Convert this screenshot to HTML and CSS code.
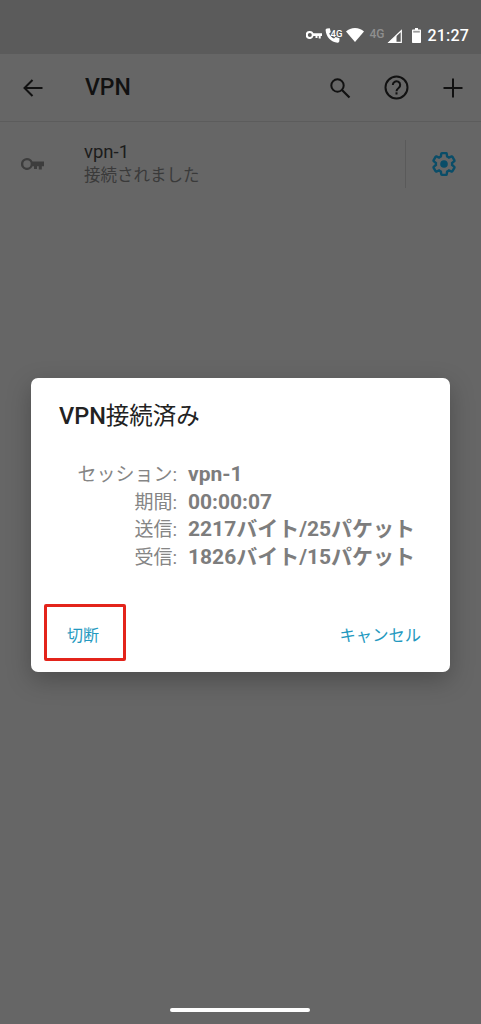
FILE: index.html
```html
<!DOCTYPE html>
<html lang="ja">
<head>
    <meta charset="UTF-8">
    <meta name="viewport" content="width=device-width, initial-scale=1.0">
    <title>VPN</title>
    <link rel="stylesheet" href="styles.css">
</head>
<body>
    <div class="screen">
        <div class="status-bar">
            <svg class="st-key" width="16" height="8" viewBox="0 0 16 8"><path d="M3.800 0a4 4 0 0 1 3.700 2.300H16V5H14.700V7.600H12.700V5H11.500V7H9.500V5H7.500A4 4 0 1 1 3.800 0zm0 2a2 2 0 1 0 0 4 2 2 0 0 0 0-4z" fill="#fff" fill-rule="evenodd"/></svg>
            <span class="st-call">
                <svg width="15" height="15" viewBox="0 0 15 15"><path d="M2 0.500L4.800 0.200 5.800 4 4.200 5.500C5 7.800 6.800 9.600 9 10.500L10.600 9 14.500 10.300 14.300 13.300C14.200 14.300 13.500 14.800 12.500 14.700 6 14 1 9 0.600 2 0.600 1.200 1.200 0.600 2 0.500z" fill="#fff"/></svg>
                <span class="st-4g">4G</span>
            </span>
            <svg class="st-wifi" width="18" height="14" viewBox="0 0 18 14"><path d="M9 14L0 3.600C2.400 1.400 5.500 0 9 0s6.600 1.400 9 3.600z" fill="#fff"/></svg>
            <span class="st-4g-off">4G</span>
            <svg class="st-signal" width="15" height="14" viewBox="0 0 15 14"><path d="M14.300 1.700V13.300H2z" fill="none" stroke="#fff" stroke-width="1.200"/><path d="M9.500 6.500V14H1z" fill="#fff"/></svg>
            <svg class="st-battery" width="9" height="15" viewBox="0 0 9 15"><path d="M3 0H6V1.500H8C8.600 1.500 9 1.900 9 2.500V14C9 14.600 8.600 15 8 15H1C0.400 15 0 14.600 0 14V2.500C0 1.900 0.400 1.500 1 1.500H3z" fill="#fff"/><rect x="1.200" y="2.800" width="6.600" height="1.800" fill="#9c9c9c"/></svg>
            <span class="st-time">21:27</span>
        </div>

        <div class="toolbar">
            <svg class="back-icon" width="20" height="18" viewBox="0 0 20 18"><path d="M19.500 9H2M9.500 1L1.500 9l8 8" fill="none" stroke="#111" stroke-width="2"/></svg>
            <div class="toolbar-title">VPN</div>
            <svg class="search-icon" width="22" height="22" viewBox="0 0 22 22"><circle cx="8.500" cy="8.500" r="6.200" fill="none" stroke="#111" stroke-width="2"/><path d="M13 13l7.500 7.500" stroke="#111" stroke-width="2.200"/></svg>
            <svg class="help-icon" width="25" height="25" viewBox="0 0 25 25"><circle cx="12.500" cy="12.500" r="11" fill="none" stroke="#111" stroke-width="2"/><path d="M8.800 10a3.700 3.700 0 1 1 5.800 3c-1.400 1-2.100 1.600-2.100 3.200" fill="none" stroke="#111" stroke-width="2"/><rect x="11.500" y="17.300" width="2" height="2.200" fill="#111"/></svg>
            <svg class="plus-icon" width="20" height="20" viewBox="0 0 20 20"><path d="M10 0.500v19M0.500 10h19" stroke="#111" stroke-width="2"/></svg>
        </div>

        <div class="vpn-row">
            <svg class="key-icon" width="23" height="12" viewBox="0 0 23 12"><path d="M6 0a6 6 0 0 1 5.500 3.600H23V8.200H20.800V11.500H17.800V8.200H16V11H13V8.200H11.500A6 6 0 1 1 6 0zm0 2.300a3.700 3.700 0 1 0 0 7.400 3.700 3.700 0 0 0 0-7.400z" fill="#3d3d3d" fill-rule="evenodd"/></svg>
            <div class="vpn-text">
                <div class="vpn-name">vpn-1</div>
                <div class="vpn-status">接続されました</div>
            </div>
            <div class="vpn-sep"></div>
            <svg class="gear-icon" width="26" height="26" viewBox="0 0 24 24"><path d="M19.430 12.980c.04-.32.07-.64.070-.98s-.03-.66-.07-.98l2.110-1.650c.19-.15.240-.42.120-.64l-2-3.460c-.12-.22-.39-.3-.61-.22l-2.490 1c-.52-.4-1.080-.73-1.690-.98l-.38-2.650A.488.488 0 0 0 14 2h-4c-.25 0-.46.180-.49.420l-.38 2.650c-.61.250-1.170.590-1.690.98l-2.490-1c-.23-.09-.49 0-.61.220l-2 3.460c-.13.220-.07.490.12.640l2.110 1.650c-.04.320-.07.650-.07.980s.03.660.07.980l-2.110 1.650c-.19.150-.24.420-.12.640l2 3.460c.12.220.39.300.61.220l2.490-1c.52.400 1.080.730 1.690.980l.38 2.650c.03.240.24.420.49.420h4c.25 0 .46-.18.49-.42l.38-2.650c.61-.25 1.170-.59 1.690-.98l2.490 1c.23.090.49 0 .61-.22l2-3.460c.12-.22.07-.49-.12-.64l-2.110-1.650z" fill="none" stroke="#0a4d68" stroke-width="2.200"/><circle cx="12" cy="12" r="3.500" fill="#0a4d68"/></svg>
        </div>

        <div class="home-bar"></div>

        <div class="dialog-layer">
            <div class="dialog">
                <div class="dialog-title"><span class="title-latin">VPN</span>接続済み</div>
                <div class="info">
                    <div class="info-label">セッション:</div><div class="info-value">vpn-1</div>
                    <div class="info-label">期間:</div><div class="info-value">00:00:07</div>
                    <div class="info-label">送信:</div><div class="info-value">2217バイト/25パケット</div>
                    <div class="info-label">受信:</div><div class="info-value">1826バイト/15パケット</div>
                </div>
                <div class="dialog-actions">
                    <div class="action">切断</div>
                    <div class="action action-cancel">キャンセル</div>
                </div>
                <div class="highlight"></div>
            </div>
        </div>
    </div>
</body>
</html>
```

FILE: styles.css
```css
* {
    margin: 0;
    padding: 0;
    box-sizing: border-box;
}
html, body {
    width: 481px;
    height: 1024px;
    overflow: hidden;
}
body {
    font-family: Roboto, "Noto Sans CJK JP", sans-serif;
    background: #666;
}
.screen {
    position: relative;
    height: 1024px;
    display: flex;
    flex-direction: column;
    background: #666;
}
.status-bar {
    height: 54px;
    padding: 22px 12px 0 0;
    background: #5b5b5b;
    display: flex;
    align-items: flex-start;
    justify-content: flex-end;
    color: #fff;
}
.st-key {
    margin: 9px 3px 0 0;
}
.st-call {
    display: flex;
    margin: 6px 4px 0 0;
}
.st-4g {
    font-size: 9.500px;
    line-height: 11px;
    font-weight: 500;
    margin-left: -9px;
}
.st-wifi {
    margin: 6px 5px 0 0;
}
.st-4g-off {
    font-size: 12px;
    line-height: 14px;
    font-weight: 500;
    color: #8f8f8f;
    margin: 5px 3px 0 0;
}
.st-signal {
    margin: 7px 10px 0 0;
}
.st-battery {
    margin: 6px 6px 0 0;
}
.st-time {
    font-size: 16px;
    line-height: 28px;
    font-weight: 500;
    letter-spacing: 0.2px;
}
.toolbar {
    height: 68px;
    display: flex;
    align-items: center;
    border-bottom: 1px solid #5c5c5c;
}
.back-icon {
    margin-left: 23px;
}
.toolbar-title {
    margin-left: 42px;
    flex: 1;
    font-size: 23px;
    font-weight: 500;
    color: #111;
}
.search-icon {
    margin-right: 33px;
}
.help-icon {
    margin-right: 34px;
}
.plus-icon {
    margin-right: 18px;
}
.vpn-row {
    height: 84px;
    display: flex;
    align-items: center;
}
.key-icon {
    margin-left: 21px;
}
.vpn-text {
    margin-left: 40px;
    flex: 1;
}
.vpn-name {
    font-size: 18.500px;
    line-height: 23px;
    color: #1c1c1c;
}
.vpn-status {
    font-size: 16.500px;
    line-height: 23px;
    color: #3a3a3a;
}
.vpn-sep {
    width: 1px;
    height: 48px;
    background: #5a5a5a;
    margin-right: 25px;
}
.gear-icon {
    margin-right: 24px;
}
.home-bar {
    position: absolute;
    left: 170px;
    top: 1008px;
    width: 140px;
    height: 4px;
    border-radius: 2px;
    background: #fff;
}
.dialog-layer {
    position: absolute;
    inset: 0;
    padding: 378px 31px 0;
}
.dialog {
    position: relative;
    height: 294px;
    background: #fff;
    border-radius: 7px;
    box-shadow: 0 8px 24px rgba(0, 0, 0, 0.25);
    display: flex;
    flex-direction: column;
}
.dialog-title {
    padding: 23px 28px 0;
    font-size: 23.500px;
    line-height: 30px;
    color: #222;
}
.title-latin {
    font-weight: 500;
}
.info {
    margin-top: 30px;
    display: grid;
    grid-template-columns: 146px 1fr;
    column-gap: 11px;
    line-height: 27.500px;
    color: #7d7d7d;
}
.info-label {
    text-align: right;
    font-size: 19px;
    color: #858585;
}
.info-value {
    font-size: 21px;
    font-weight: 700;
    white-space: nowrap;
}
.dialog-actions {
    margin-top: auto;
    padding: 0 29px 24px 36px;
    display: flex;
    justify-content: space-between;
}
.action {
    font-size: 16px;
    line-height: 24px;
    color: #2499c0;
}
.action-cancel {
    font-size: 16.300px;
}
.highlight {
    position: absolute;
    left: 13px;
    top: 226px;
    width: 82px;
    height: 57px;
    border: 3px solid #e3241b;
    border-radius: 2px;
}
```
